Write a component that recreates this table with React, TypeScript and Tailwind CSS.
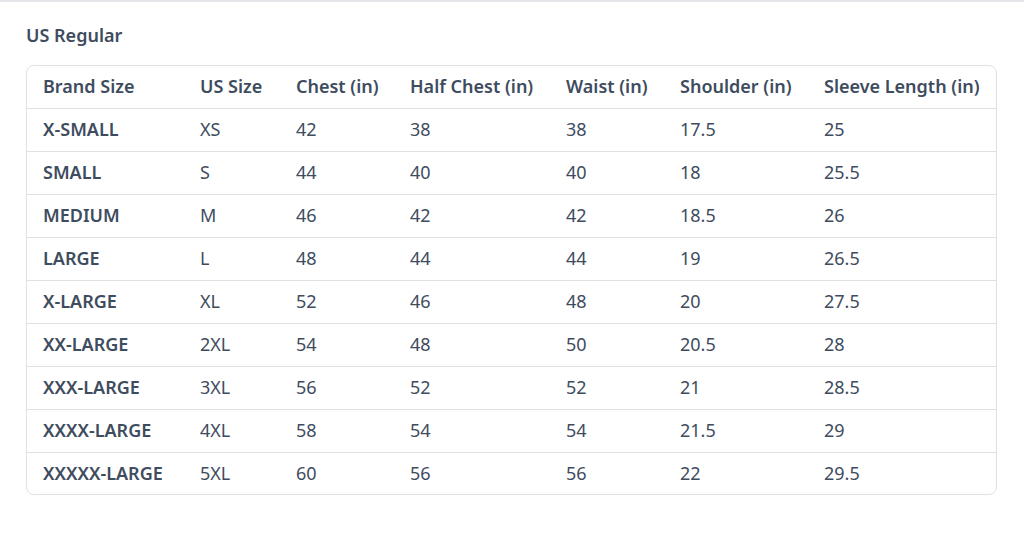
const columns = [
  { label: 'Brand Size', width: 'w-[157px]' },
  { label: 'US Size', width: 'w-[96px]' },
  { label: 'Chest (in)', width: 'w-[114px]' },
  { label: 'Half Chest (in)', width: 'w-[156px]' },
  { label: 'Waist (in)', width: 'w-[114px]' },
  { label: 'Shoulder (in)', width: 'w-[144px]' },
  { label: 'Sleeve Length (in)', width: '' },
];

const rows = [
  ['X-SMALL', 'XS', '42', '38', '38', '17.5', '25'],
  ['SMALL', 'S', '44', '40', '40', '18', '25.5'],
  ['MEDIUM', 'M', '46', '42', '42', '18.5', '26'],
  ['LARGE', 'L', '48', '44', '44', '19', '26.5'],
  ['X-LARGE', 'XL', '52', '46', '48', '20', '27.5'],
  ['XX-LARGE', '2XL', '54', '48', '50', '20.5', '28'],
  ['XXX-LARGE', '3XL', '56', '52', '52', '21', '28.5'],
  ['XXXX-LARGE', '4XL', '58', '54', '54', '21.5', '29'],
  ['XXXXX-LARGE', '5XL', '60', '56', '56', '22', '29.5'],
];

export default function App() {
  return (
    <div className="min-h-[551px] w-[1024px] border-t-2 border-[#e3e5e8] bg-white font-['Noto_Sans',sans-serif] text-[#3e4c5e]">
      <div className="px-[26px] pt-[21px]">
        <h2 className="text-[18px] font-semibold leading-6">US Regular</h2>
        <div className="mt-[18px] w-[971px] overflow-hidden rounded-lg border border-[#dfe1e4]">
          <table className="w-full table-fixed border-collapse text-left text-[18px]">
            <colgroup>
              {columns.map((c) => (
                <col key={c.label} className={c.width} />
              ))}
            </colgroup>
            <thead>
              <tr className="h-[42px] border-b border-[#dfe1e4]">
                {columns.map((c) => (
                  <th key={c.label} className="whitespace-nowrap pl-4 font-semibold">
                    {c.label}
                  </th>
                ))}
              </tr>
            </thead>
            <tbody>
              {rows.map((row, i) => (
                <tr
                  key={row[0]}
                  className={i < rows.length - 1 ? 'h-[43px] border-b border-[#dfe1e4]' : 'h-[42px]'}
                >
                  {row.map((cell, j) => (
                    <td key={j} className={j === 0 ? 'whitespace-nowrap pl-4 font-semibold' : 'whitespace-nowrap pl-4'}>
                      {cell}
                    </td>
                  ))}
                </tr>
              ))}
            </tbody>
          </table>
        </div>
      </div>
    </div>
  );
}
